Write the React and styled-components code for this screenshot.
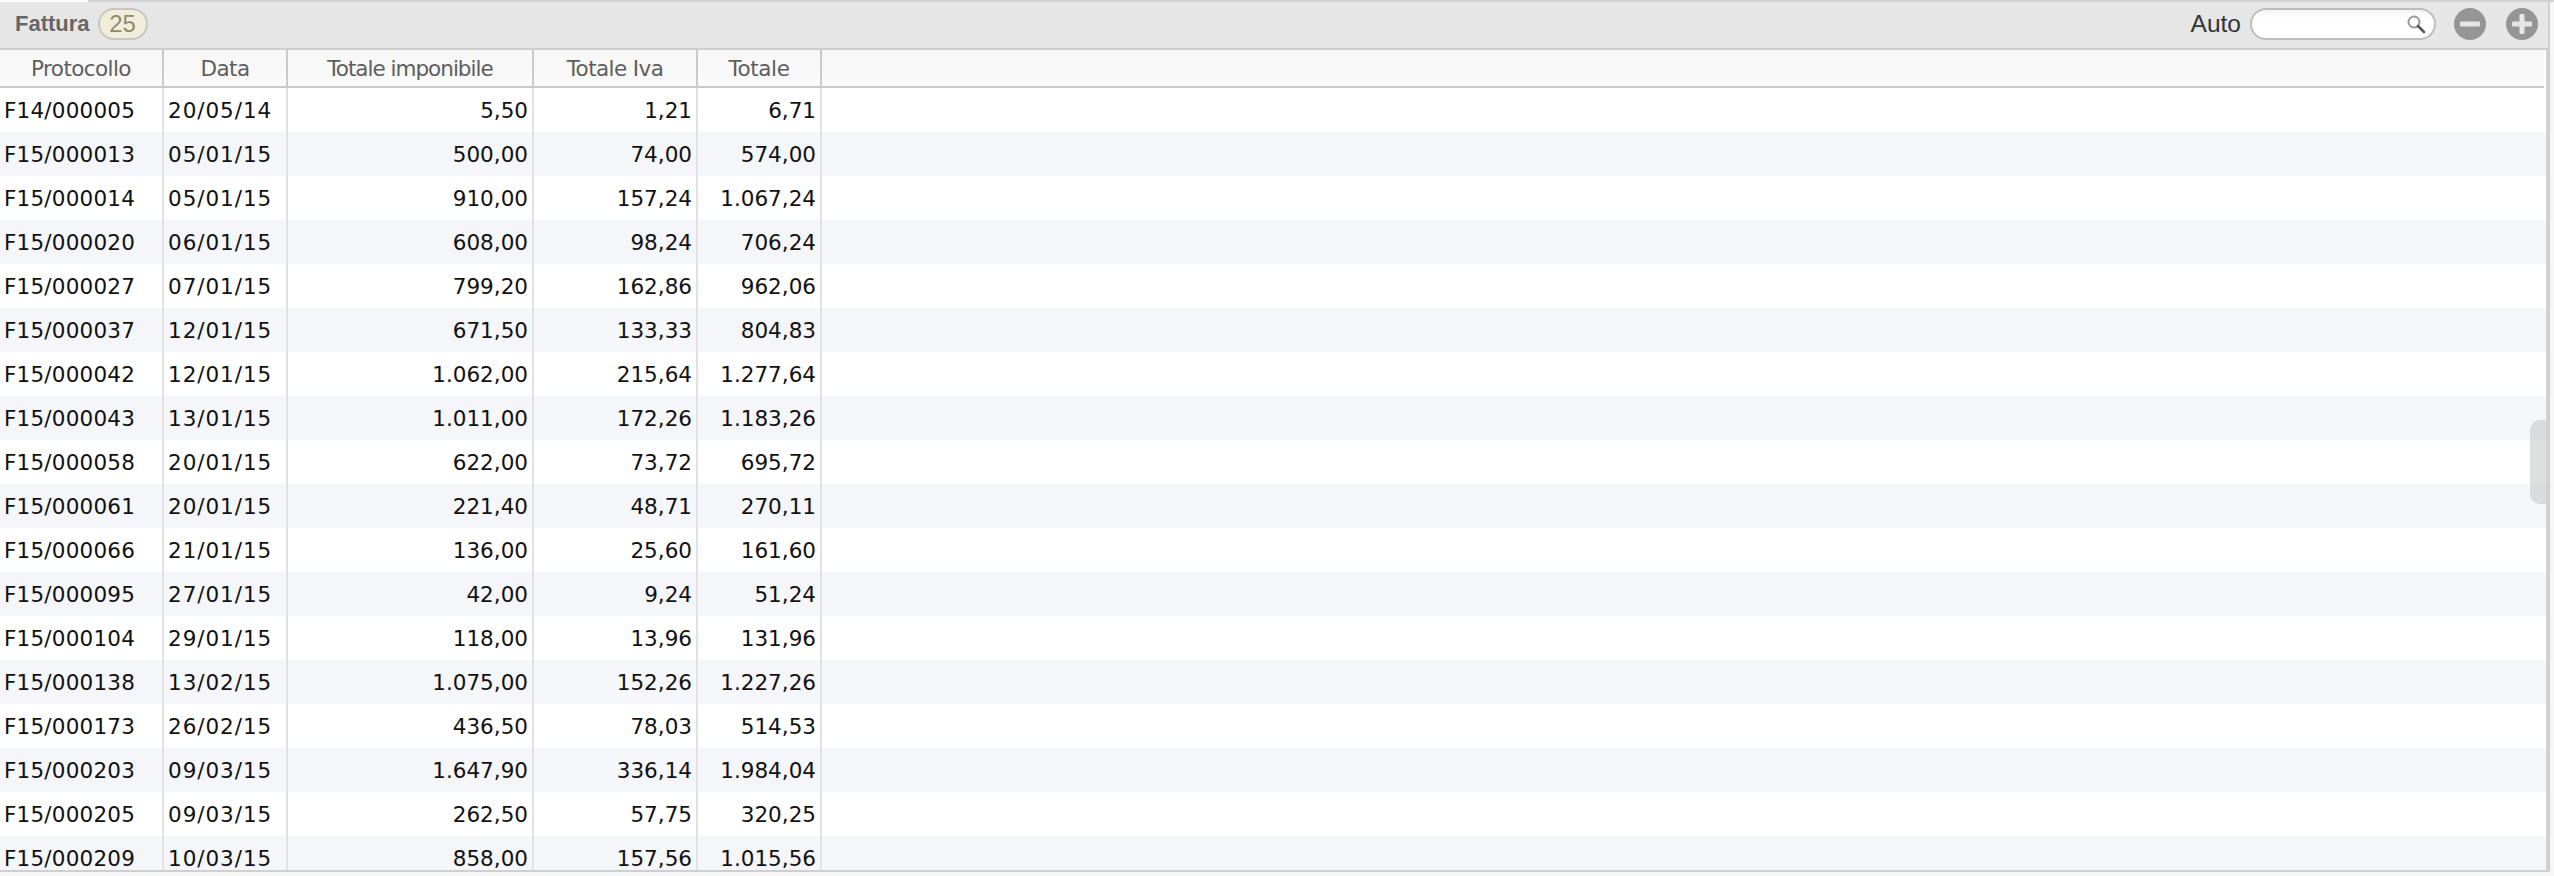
import React from "react";
import styled, { createGlobalStyle } from "styled-components";

const GlobalStyle = createGlobalStyle`
	html, body {
		margin: 0;
		padding: 0;
		background: #f6f6f6;
	}
	body {
		width: 2554px;
		height: 876px;
		overflow: hidden;
	}
`;

const COLUMNS = [
	{ title: "Protocollo", width: 164, tracking: -0.6, cellTracking: 0.2 },
	{ title: "Data", width: 124, tracking: -0.6, cellTracking: 0.95 },
	{ title: "Totale imponibile", width: 246, tracking: -1 },
	{ title: "Totale Iva", width: 164, tracking: -0.6 },
	{ title: "Totale", width: 124, tracking: -0.4 },
];

const ROWS = [
	["F14/000005", "20/05/14", "5,50", "1,21", "6,71"],
	["F15/000013", "05/01/15", "500,00", "74,00", "574,00"],
	["F15/000014", "05/01/15", "910,00", "157,24", "1.067,24"],
	["F15/000020", "06/01/15", "608,00", "98,24", "706,24"],
	["F15/000027", "07/01/15", "799,20", "162,86", "962,06"],
	["F15/000037", "12/01/15", "671,50", "133,33", "804,83"],
	["F15/000042", "12/01/15", "1.062,00", "215,64", "1.277,64"],
	["F15/000043", "13/01/15", "1.011,00", "172,26", "1.183,26"],
	["F15/000058", "20/01/15", "622,00", "73,72", "695,72"],
	["F15/000061", "20/01/15", "221,40", "48,71", "270,11"],
	["F15/000066", "21/01/15", "136,00", "25,60", "161,60"],
	["F15/000095", "27/01/15", "42,00", "9,24", "51,24"],
	["F15/000104", "29/01/15", "118,00", "13,96", "131,96"],
	["F15/000138", "13/02/15", "1.075,00", "152,26", "1.227,26"],
	["F15/000173", "26/02/15", "436,50", "78,03", "514,53"],
	["F15/000203", "09/03/15", "1.647,90", "336,14", "1.984,04"],
	["F15/000205", "09/03/15", "262,50", "57,75", "320,25"],
	["F15/000209", "10/03/15", "858,00", "157,56", "1.015,56"],
];

const Window = styled.div`
	width: 2554px;
	height: 876px;
	display: flex;
	flex-direction: column;
	overflow: hidden;
`;

const TopEdge = styled.div`
	height: 2px;
	flex: none;
	background: #d2d2d2;

	&::before {
		content: "";
		display: block;
		width: 88px;
		height: 2px;
		background: #fbfbfb;
	}
`;

const Panel = styled.div`
	width: 2550px;
	height: 870px;
	flex: none;
	box-sizing: border-box;
	display: flex;
	flex-direction: column;
	border-right: 2px solid #cfcfcf;
	border-bottom: 2px solid #cfcfcf;
	position: relative;
	overflow: hidden;
`;

const Toolbar = styled.div`
	height: 48px;
	flex: none;
	box-sizing: border-box;
	display: flex;
	align-items: center;
	padding: 0 10px 2px 15px;
	background: #e6e6e6;
	border-bottom: 2px solid #cdcdcd;
`;

const Title = styled.span`
	font: bold 22px "Liberation Sans", Arial, sans-serif;
	color: #666;
`;

const Badge = styled.span`
	margin-left: 8px;
	width: 50px;
	height: 32px;
	box-sizing: border-box;
	display: flex;
	align-items: center;
	justify-content: center;
	border: 2px solid #c6c6c6;
	border-radius: 16px;
	background: #f1eddb;
	color: #8f8c6c;
	font: 24px "Liberation Sans", Arial, sans-serif;
`;

const ToolbarRight = styled.div`
	margin-left: auto;
	display: flex;
	align-items: center;
`;

const AutoLabel = styled.span`
	font: 24.5px "Liberation Sans", Arial, sans-serif;
	color: #333;
	margin-right: 9px;
`;

const SearchBox = styled.div`
	width: 186px;
	height: 32px;
	box-sizing: border-box;
	display: flex;
	align-items: center;
	justify-content: flex-end;
	padding-right: 8px;
	border: 2px solid #bdbdc0;
	border-radius: 16px;
	background: linear-gradient(#f4f4f4, #fff 30%);
`;

const RoundButton = styled.svg`
	width: 32px;
	height: 32px;
	margin-left: ${({ $gap }) => $gap}px;
	display: block;
`;

const Grid = styled.div`
	flex: 1;
	min-height: 0;
	overflow: hidden;
	background: #fff;
	border-right: 2px solid #d2d2d2;
`;

const HeaderRow = styled.div`
	height: 38px;
	box-sizing: border-box;
	display: flex;
	background: linear-gradient(#f7f7f7, #fafafa);
	border-bottom: 2px solid #c9c9c9;
	margin-right: 2px;
`;

const HeaderCell = styled.div`
	width: ${({ $width }) => $width}px;
	flex: none;
	box-sizing: border-box;
	display: flex;
	align-items: center;
	justify-content: center;
	border-right: 2px solid #cacaca;
	font: 21.5px "DejaVu Sans", Verdana, sans-serif;
	letter-spacing: ${({ $tracking }) => $tracking}px;
	color: #5e5e5e;
`;

const Row = styled.div`
	height: 44px;
	display: flex;
	background: ${({ $striped }) => ($striped ? "#f4f6fa" : "#fff")};
`;

const Cell = styled.div`
	width: ${({ $width }) => $width}px;
	flex: none;
	box-sizing: border-box;
	display: flex;
	align-items: center;
	justify-content: ${({ $right }) => ($right ? "flex-end" : "flex-start")};
	padding: 0 ${({ $right }) => ($right ? 4 : 0)}px 0 ${({ $right }) => ($right ? 0 : 4)}px;
	border-right: 2px solid #e2e2e2;
	font: 21.5px "DejaVu Sans", Verdana, sans-serif;
	letter-spacing: ${({ $tracking }) => $tracking || 0}px;
	color: #111;
`;

const ScrollThumb = styled.div`
	position: absolute;
	right: 2px;
	top: 418px;
	width: 16px;
	height: 84px;
	border-radius: 10px 0 0 10px;
	background: rgba(190, 192, 196, 0.5);
`;

function SearchIcon() {
	return (
		<svg width="20" height="20" viewBox="0 0 20 20">
			<circle cx="8" cy="8" r="5.5" fill="#fff" stroke="#9a9a9a" strokeWidth="2" />
			<path d="M12 12l6 6" stroke="#555" strokeWidth="2.6" strokeLinecap="round" />
		</svg>
	);
}

function MinusButton({ gap }) {
	return (
		<RoundButton $gap={gap} viewBox="0 0 32 32">
			<circle cx="16" cy="16" r="16" fill="#959595" />
			<rect x="6" y="13.5" width="20" height="5" rx="1" fill="#e6e6e6" />
		</RoundButton>
	);
}

function PlusButton({ gap }) {
	return (
		<RoundButton $gap={gap} viewBox="0 0 32 32">
			<circle cx="16" cy="16" r="16" fill="#959595" />
			<rect x="6" y="13.5" width="20" height="5" rx="1" fill="#e6e6e6" />
			<rect x="13.5" y="6" width="5" height="20" rx="1" fill="#e6e6e6" />
		</RoundButton>
	);
}

export default function App() {
	return (
		<Window>
			<GlobalStyle />
			<TopEdge />
			<Panel>
				<Toolbar>
					<Title>Fattura</Title>
					<Badge>25</Badge>
					<ToolbarRight>
						<AutoLabel>Auto</AutoLabel>
						<SearchBox>
							<SearchIcon />
						</SearchBox>
						<MinusButton gap={18} />
						<PlusButton gap={20} />
					</ToolbarRight>
				</Toolbar>
				<Grid>
					<HeaderRow>
						{COLUMNS.map(col => (
							<HeaderCell key={col.title} $width={col.width} $tracking={col.tracking}>
								{col.title}
							</HeaderCell>
						))}
					</HeaderRow>
					{ROWS.map((row, i) => (
						<Row key={row[0]} $striped={i % 2 === 1}>
							{row.map((value, c) => (
								<Cell
									key={c}
									$width={COLUMNS[c].width}
									$right={c > 1}
									$tracking={COLUMNS[c].cellTracking}
								>
									{value}
								</Cell>
							))}
						</Row>
					))}
				</Grid>
				<ScrollThumb />
			</Panel>
		</Window>
	);
}
